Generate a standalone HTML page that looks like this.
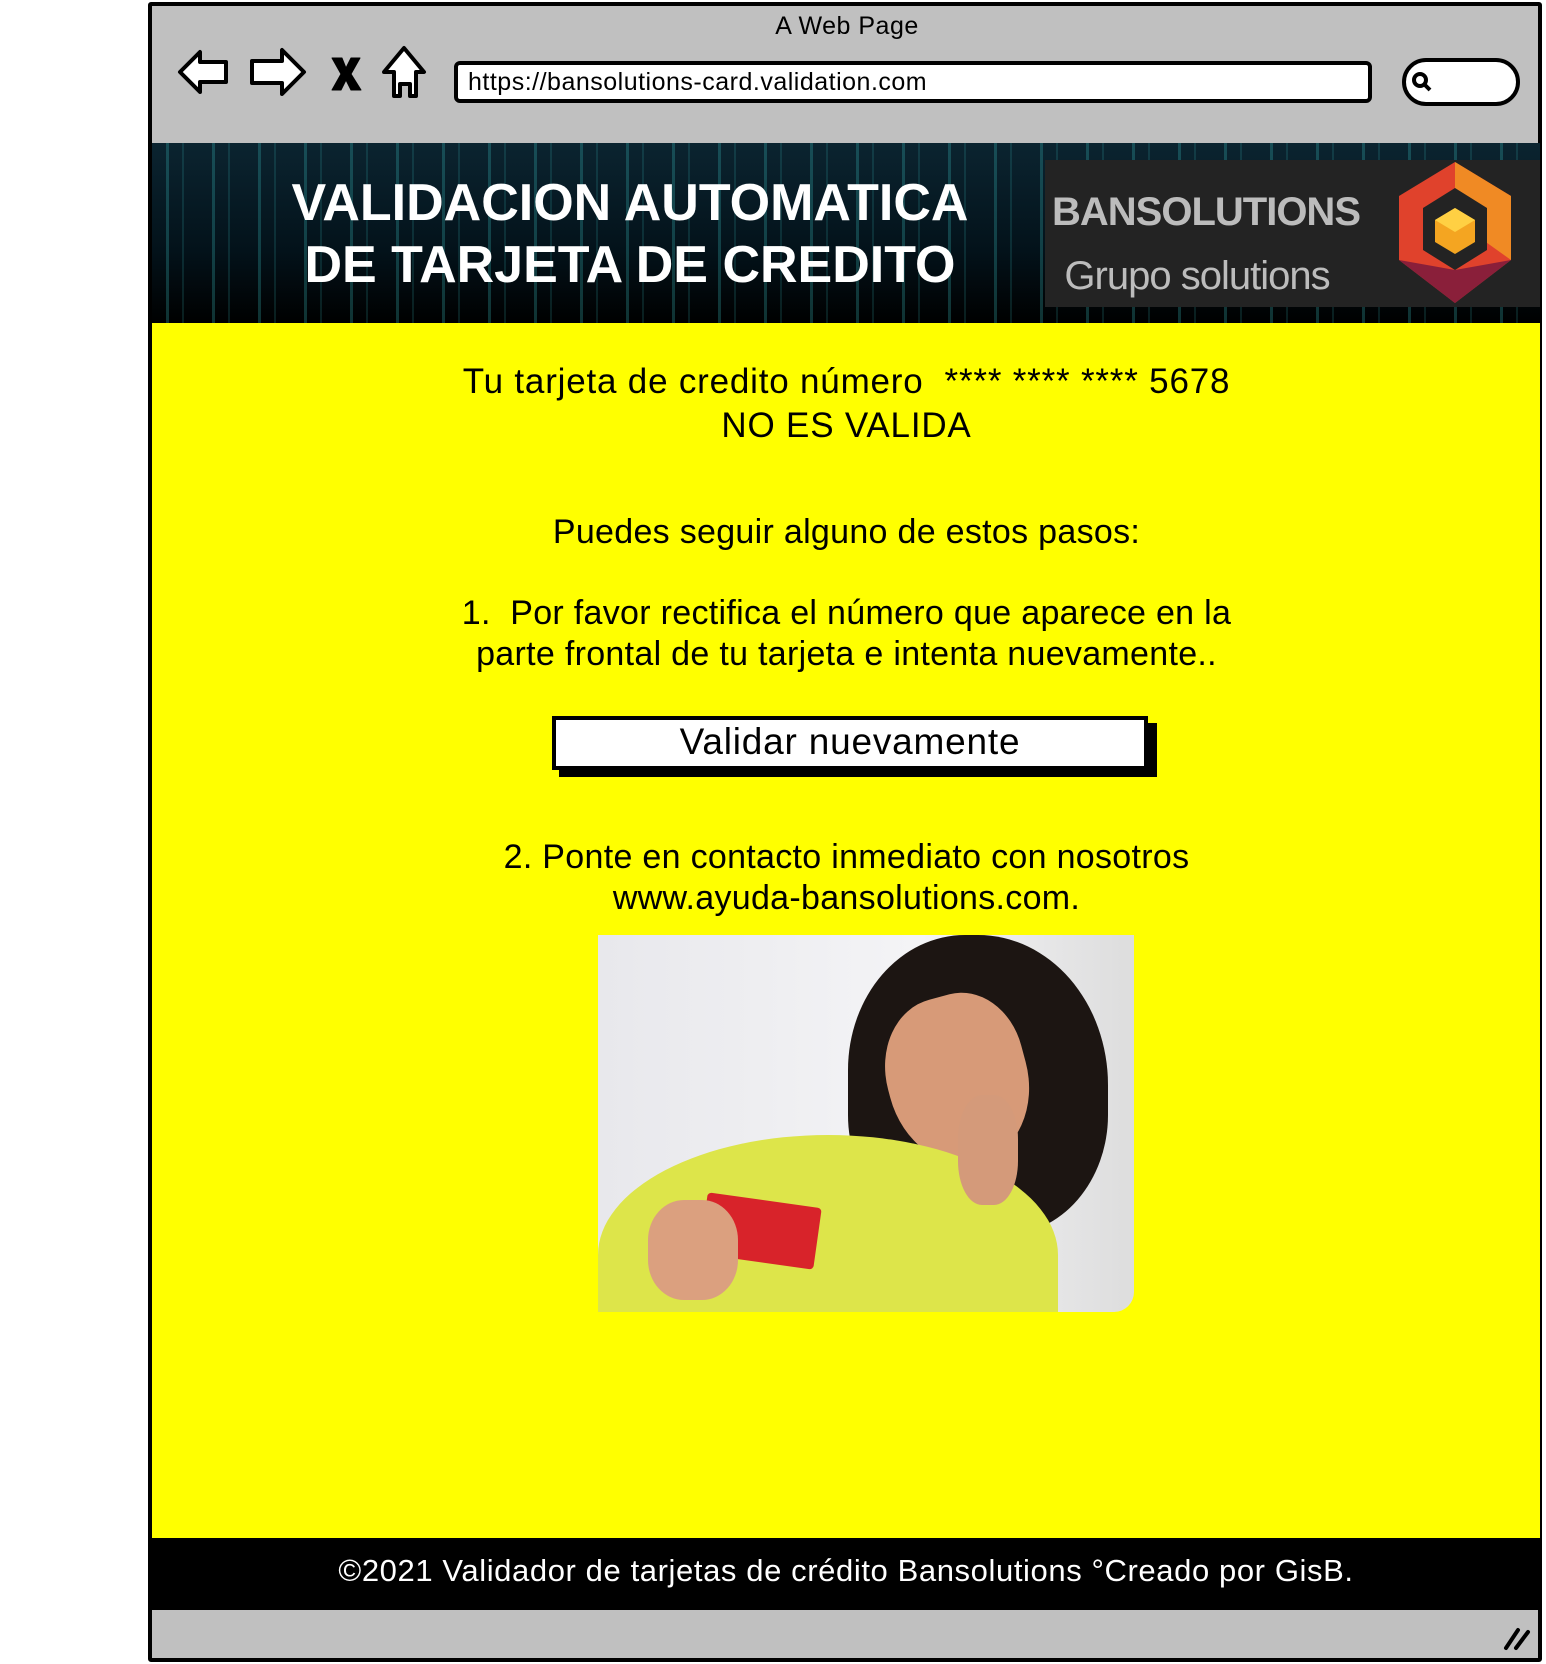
<!DOCTYPE html>
<html><head><meta charset="utf-8"><style>
*{margin:0;padding:0;box-sizing:border-box}
body{width:1546px;height:1664px;background:#fff;position:relative;overflow:hidden;font-family:"Liberation Sans",sans-serif}
.abs{position:absolute}
.c{position:absolute;left:153px;width:1387px;text-align:center;color:#000;font-size:34px;line-height:41px;letter-spacing:0.3px}
</style></head><body>
<div class="abs" style="left:148px;top:2px;width:1394px;height:1660px;border:4px solid #000;background:#c0c0c0;border-radius:3px"></div>
<div class="abs" style="left:150px;top:12px;width:1394px;text-align:center;font-size:25px;letter-spacing:.5px">A Web Page</div>
<svg class="abs" style="left:176px;top:44px" width="270" height="60" viewBox="0 0 270 60" fill="#fff" stroke="#000" stroke-width="4" stroke-linejoin="round">
<path d="M4 28 L24 8 L24 18 L50 18 L50 38 L24 38 L24 48 Z"/>
<path d="M128 28 L106 6 L106 17 L76 17 L76 39 L106 39 L106 50 Z"/>
<path d="M156 14 L166 14 L170 24 L175 14 L184 14 L175 30 L185 46 L175 46 L170 36 L165 46 L156 46 L165 30 Z" fill="#000" stroke-width="1"/>
<path d="M228 4 L248 28 L240 28 L240 52 L234 52 L234 40 L224 40 L224 52 L218 52 L218 28 L208 28 Z"/>
</svg>
<div class="abs" style="left:454px;top:61px;width:918px;height:42px;border:4px solid #000;border-radius:6px;background:#fff;font-size:25px;line-height:34px;padding-left:10px;letter-spacing:.5px">https://bansolutions-card.validation.com</div>
<div class="abs" style="left:1402px;top:58px;width:118px;height:48px;border:4px solid #000;border-radius:24px;background:#fff"></div>
<svg class="abs" style="left:1410px;top:70px" width="24" height="24"><circle cx="10" cy="10" r="6" fill="none" stroke="#000" stroke-width="4"/><path d="M14 14 L20 20" stroke="#000" stroke-width="4"/></svg>
<div class="abs" style="left:152px;top:143px;width:1388px;height:180px;background:linear-gradient(#0b2430,#03121a 60%,#000);overflow:hidden">
<div style="position:absolute;inset:0;background:repeating-linear-gradient(90deg,transparent 0 14px,rgba(60,200,200,.25) 14px 17px,transparent 17px 30px,rgba(60,200,200,.15) 30px 32px,transparent 32px 46px)"></div>
</div>
<div class="abs" style="left:270px;top:172px;width:720px;text-align:center;color:#fff;font-size:52px;line-height:62px;font-weight:bold">VALIDACION AUTOMATICA<br>DE TARJETA DE CREDITO</div>
<div class="abs" style="left:1045px;top:160px;width:495px;height:147px;background:#232323"></div>
<div class="abs" style="left:1052px;top:180px;width:290px;text-align:center;color:#bcbcbc;font-size:40px;line-height:64px;font-weight:bold;letter-spacing:-1px">BANSOLUTIONS<br><span style="font-weight:normal">Grupo solutions</span></div>
<svg class="abs" style="left:1395px;top:160px" width="120" height="145" viewBox="0 0 120 145">
<path d="M60 2 L116 36 L116 100 L60 143 L4 100 L4 36 Z" fill="#e0422c"/>
<path d="M60 2 L116 36 L116 100 L60 60 Z" fill="#f08a24"/>
<path d="M4 100 L60 143 L116 100 L60 110 Z" fill="#8a1f3a"/>
<path d="M60 28 L92 48 L92 90 L60 110 L28 90 L28 48 Z" fill="#232323"/>
<path d="M60 48 L80 60 L80 82 L60 94 L40 82 L40 60 Z" fill="#f4a521"/>
<path d="M60 48 L80 60 L60 72 L40 60 Z" fill="#ffd043"/>
</svg>
<div class="abs" style="left:152px;top:323px;width:1388px;height:1215px;background:#ffff00"></div>
<div class="c" style="top:360px;line-height:44px;font-size:35px;letter-spacing:.8px">Tu tarjeta de credito número &nbsp;**** **** **** 5678<br>NO ES VALIDA</div>
<div class="c" style="top:512px">Puedes seguir alguno de estos pasos:</div>
<div class="c" style="top:593px">1.&nbsp; Por favor rectifica el número que aparece en la<br>parte frontal de tu tarjeta e intenta nuevamente..</div>
<div class="abs" style="left:559px;top:723px;width:598px;height:54px;background:#000"></div>
<div class="abs" style="left:552px;top:716px;width:596px;height:54px;background:#fff;border:4px solid #000;text-align:center;font-size:37px;line-height:44px;letter-spacing:.8px">Validar nuevamente</div>
<div class="c" style="top:837px">2. Ponte en contacto inmediato con nosotros<br>www.ayuda-bansolutions.com.</div>
<div class="abs" style="left:598px;top:935px;width:536px;height:377px;background:linear-gradient(90deg,#e8e8ec,#f4f4f6 60%,#ddd);overflow:hidden;border-radius:0 0 20px 0">
<div class="abs" style="left:250px;top:0;width:260px;height:300px;background:#1c1512;border-radius:45% 50% 40% 40%"></div>
<div class="abs" style="left:290px;top:60px;width:140px;height:170px;background:#d79a78;border-radius:45% 40% 50% 50%;transform:rotate(-15deg)"></div>
<div class="abs" style="left:0;top:200px;width:460px;height:240px;background:#dde54a;border-radius:50% 50% 0 0"></div>
<div class="abs" style="left:105px;top:265px;width:115px;height:62px;background:#d8232a;transform:rotate(8deg);border-radius:4px"></div>
<div class="abs" style="left:50px;top:265px;width:90px;height:100px;background:#dba07f;border-radius:40%"></div>
<div class="abs" style="left:360px;top:160px;width:60px;height:110px;background:#d49a7a;border-radius:40%"></div>
</div>
<div class="abs" style="left:152px;top:1538px;width:1388px;height:69px;background:#000;color:#fff;text-align:center;font-size:31px;line-height:66px;letter-spacing:.6px">©2021 Validador de tarjetas de crédito Bansolutions °Creado por GisB.</div>
<div class="abs" style="left:150px;top:1606px;width:1392px;height:4px;background:#000"></div>
<svg class="abs" style="left:1500px;top:1622px" width="36" height="30"><path d="M6 26 L18 8 M16 26 L28 10" stroke="#000" stroke-width="4" stroke-linecap="round"/></svg>
</body></html>
